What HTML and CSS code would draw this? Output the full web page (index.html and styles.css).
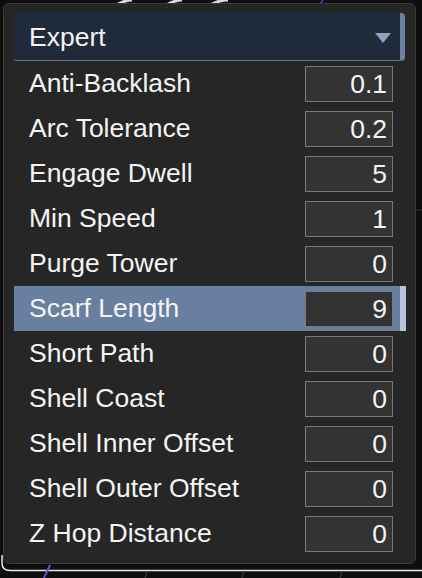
FILE: index.html
```html
<!DOCTYPE html>
<html>
<head>
<meta charset="utf-8">
<link rel="stylesheet" href="styles.css">
</head>
<body>
<svg class="scene" width="422" height="578" viewBox="0 0 422 578">
  <path d="M118 4 Q126 0 132 0" stroke="#d8d8d8" stroke-width="3" fill="none"/>
  <path d="M168 4 Q176 0 182 0" stroke="#d8d8d8" stroke-width="3" fill="none"/>
  <path d="M212 4 Q220 0 228 0" stroke="#d8d8d8" stroke-width="3" fill="none"/>
  <line x1="320" y1="4" x2="323" y2="0" stroke="#4a44c8" stroke-width="1.5"/>
  <path d="M2 555 L2 563 Q2 570.5 10 570.5 L422 570.5" stroke="#e6e6e6" stroke-width="1.5" fill="none"/>
  <line x1="44" y1="578" x2="50" y2="565" stroke="#5a55d0" stroke-width="2"/>
  <line x1="145" y1="578" x2="147" y2="572" stroke="#444" stroke-width="1"/>
  <line x1="242" y1="578" x2="244" y2="572" stroke="#444" stroke-width="1"/>
  <line x1="340" y1="578" x2="342" y2="572" stroke="#444" stroke-width="1"/>
  <line x1="416" y1="210" x2="422" y2="210" stroke="#333" stroke-width="1"/>
</svg>
<div class="panel">
  <div class="header">
    <span class="header-label">Expert</span>
    <span class="caret"></span>
  </div>
  <div class="rows">
    <div class="row"><span class="label">Anti-Backlash</span><span class="value">0.1</span></div>
    <div class="row"><span class="label">Arc Tolerance</span><span class="value">0.2</span></div>
    <div class="row"><span class="label">Engage Dwell</span><span class="value">5</span></div>
    <div class="row"><span class="label">Min Speed</span><span class="value">1</span></div>
    <div class="row"><span class="label">Purge Tower</span><span class="value">0</span></div>
    <div class="row selected"><span class="label">Scarf Length</span><span class="value">9</span></div>
    <div class="row"><span class="label">Short Path</span><span class="value">0</span></div>
    <div class="row"><span class="label">Shell Coast</span><span class="value">0</span></div>
    <div class="row"><span class="label">Shell Inner Offset</span><span class="value">0</span></div>
    <div class="row"><span class="label">Shell Outer Offset</span><span class="value">0</span></div>
    <div class="row"><span class="label">Z Hop Distance</span><span class="value">0</span></div>
  </div>
</div>
</body>
</html>
```
FILE: styles.css
```css
html, body {
  margin: 0;
  padding: 0;
}
body {
  width: 422px;
  height: 578px;
  box-sizing: border-box;
  padding: 3px 0 0 3px;
  overflow: hidden;
  background: #0e0e0e;
  font-family: "Liberation Sans", Arial, Helvetica, sans-serif;
  color: #f4f4f4;
  position: relative;
}
.scene {
  position: absolute;
  left: 0;
  top: 0;
}
.panel {
  position: relative;
  width: 413px;
  height: 561px;
  box-sizing: border-box;
  border: 1px solid #3b3b3b;
  border-radius: 6px;
  background: #262626;
  padding: 9px 0 0 10px;
}
.header {
  width: 391px;
  height: 48px;
  box-sizing: border-box;
  background: #1f2a3b;
  border-right: 5px solid #6a81a3;
  border-bottom: 1px solid #5d7599;
  border-radius: 2px 4px 4px 2px;
  display: flex;
  align-items: center;
  justify-content: space-between;
  padding: 0 9px 0 15px;
}
.header-label {
  font-size: 26.5px;
  line-height: 1;
  padding-top: 1px;
}
.caret {
  width: 0;
  height: 0;
  border-left: 8.5px solid transparent;
  border-right: 8.5px solid transparent;
  border-top: 10px solid #8ea2c0;
  margin-top: 2px;
}
.rows {
  display: flex;
  flex-direction: column;
}
.row {
  width: 392px;
  height: 45px;
  box-sizing: border-box;
  display: flex;
  align-items: center;
  justify-content: space-between;
  padding: 0 13px 0 15px;
}
.row.selected {
  background: #687fa0;
  border-right: 6px solid #b8c4d7;
  padding-right: 7px;
}
.label {
  font-size: 26.5px;
  line-height: 1;
}
.value {
  width: 88px;
  height: 36px;
  box-sizing: border-box;
  border: 1px solid #787878;
  background: #333333;
  font-size: 26.5px;
  line-height: 34px;
  text-align: right;
  padding-right: 5px;
}
```
